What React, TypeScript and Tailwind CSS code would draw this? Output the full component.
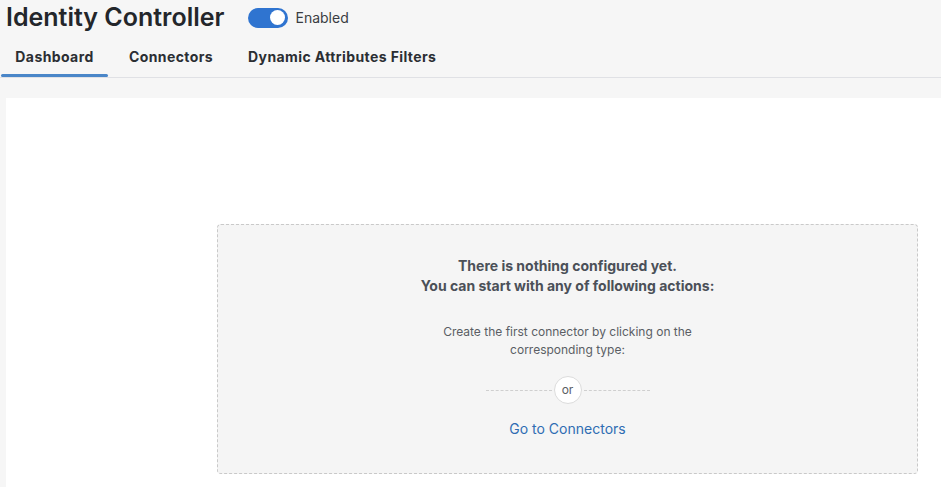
export default function App() {
  return (
    <div className="w-[941px] h-[487px] overflow-hidden bg-[#f6f6f6] font-['Inter',sans-serif] text-[#2b2e33]">
      {/* header */}
      <div className="flex items-center h-[34px] pl-[6px] pt-[1px]">
        <h1 className="text-[25px] font-semibold leading-none text-[#23262b]">Identity Controller</h1>
        <div className="ml-[23px] flex items-center gap-[8px]">
          <div className="w-[40px] h-[20px] rounded-full bg-[#2f74d0] flex items-center justify-end pr-[3px]">
            <div className="w-[15px] h-[15px] rounded-full bg-white" />
          </div>
          <span className="text-[14px] text-[#3a3d42]">Enabled</span>
        </div>
      </div>

      {/* tabs */}
      <div className="flex h-[44px] border-b border-[#e0e1e5] pl-[1px] text-[14px] font-bold tracking-[0.4px] text-[#2b2e33]">
        <div className="relative w-[107px] flex items-center justify-center pt-[1px]">
          Dashboard
          <div className="absolute left-0 right-0 bottom-0 h-[3px] rounded-full bg-[#4a86c8]" />
        </div>
        <div className="ml-[21px] flex items-center pt-[1px]">Connectors</div>
        <div className="ml-[35px] flex items-center pt-[1px]">Dynamic Attributes Filters</div>
      </div>

      {/* panel */}
      <div className="ml-[6px] mt-[20px] bg-white h-[400px] pt-[126px] pl-[211px] pr-[23px]">
        <div className="h-[250px] rounded-[4px] border border-dashed border-[#c9c9c9] bg-[#f5f5f5] flex flex-col items-center pt-[31px]">
          <p className="text-[14px] font-bold leading-[20px] text-[#4b5058] text-center">
            There is nothing configured yet.
            <br />
            You can start with any of following actions:
          </p>
          <p className="mt-[27px] text-[12px] leading-[18px] text-[#5a5e64] text-center">
            Create the first connector by clicking on the
            <br />
            corresponding type:
          </p>
          <div className="mt-[17px] flex items-center">
            <div className="w-[66px] border-t border-dashed border-[#cfcfcf]" />
            <div className="mx-[2px] w-[28px] h-[28px] rounded-full border border-[#dcdcdc] bg-white flex items-center justify-center text-[12px] text-[#5a5e64]">
              or
            </div>
            <div className="w-[66px] border-t border-dashed border-[#cfcfcf]" />
          </div>
          <a className="mt-[15px] text-[14px] text-[#2f6db3] leading-[20px]">Go to Connectors</a>
        </div>
      </div>
    </div>
  );
}
